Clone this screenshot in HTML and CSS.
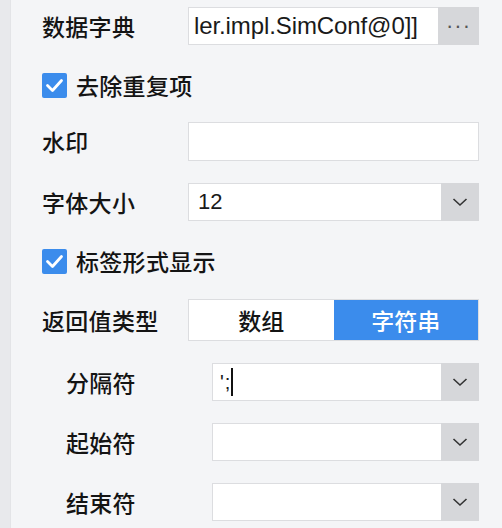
FILE: index.html
```html
<!DOCTYPE html>
<html lang="zh">
<head>
<meta charset="utf-8">
<link rel="stylesheet" href="styles.css">
</head>
<body>
<div class="page">
  <div class="strip"></div>
  <div class="panel">
    <div class="row r1">
      <div class="label">数据字典</div>
      <div class="control">
        <div class="input"><span class="val">ler.impl.SimConf@0]]</span></div>
        <div class="btn dots">···</div>
      </div>
    </div>
    <div class="row cb r2">
      <span class="check"><svg viewBox="0 0 25 25" width="25" height="25"><path d="M5.5 12.5 L10.5 17.5 L19.5 7.5" fill="none" stroke="#fff" stroke-width="2.8" stroke-linecap="round" stroke-linejoin="round"/></svg></span>
      <span class="cbtext">去除重复项</span>
    </div>
    <div class="row r3">
      <div class="label">水印</div>
      <div class="control"><div class="input"></div></div>
    </div>
    <div class="row r4">
      <div class="label">字体大小</div>
      <div class="control">
        <div class="input"><span class="val">12</span></div>
        <div class="btn"><svg viewBox="0 0 16 10" width="16" height="10"><path d="M1.5 2 L8 8 L14.5 2" fill="none" stroke="#333" stroke-width="1.6"/></svg></div>
      </div>
    </div>
    <div class="row cb r5">
      <span class="check"><svg viewBox="0 0 25 25" width="25" height="25"><path d="M5.5 12.5 L10.5 17.5 L19.5 7.5" fill="none" stroke="#fff" stroke-width="2.8" stroke-linecap="round" stroke-linejoin="round"/></svg></span>
      <span class="cbtext">标签形式显示</span>
    </div>
    <div class="row r6">
      <div class="label">返回值类型</div>
      <div class="control seg">
        <div class="segitem">数组</div>
        <div class="segitem on">字符串</div>
      </div>
    </div>
    <div class="row sub r7">
      <div class="label">分隔符</div>
      <div class="control">
        <div class="input"><span class="val sep">';</span><span class="caret"></span></div>
        <div class="btn"><svg viewBox="0 0 16 10" width="16" height="10"><path d="M1.5 2 L8 8 L14.5 2" fill="none" stroke="#333" stroke-width="1.6"/></svg></div>
      </div>
    </div>
    <div class="row sub r8">
      <div class="label">起始符</div>
      <div class="control">
        <div class="input"></div>
        <div class="btn"><svg viewBox="0 0 16 10" width="16" height="10"><path d="M1.5 2 L8 8 L14.5 2" fill="none" stroke="#333" stroke-width="1.6"/></svg></div>
      </div>
    </div>
    <div class="row sub r9">
      <div class="label">结束符</div>
      <div class="control">
        <div class="input"></div>
        <div class="btn"><svg viewBox="0 0 16 10" width="16" height="10"><path d="M1.5 2 L8 8 L14.5 2" fill="none" stroke="#333" stroke-width="1.6"/></svg></div>
      </div>
    </div>
  </div>
</div>
</body>
</html>
```
FILE: styles.css
```css
html, body {
  margin: 0;
  padding: 0;
  background: #f4f5f7;
}
body {
  font-family: "Noto Sans CJK SC", "Noto Sans", sans-serif;
  color: #141414;
}
.page {
  display: flex;
  width: 502px;
  height: 528px;
  overflow: hidden;
}
.strip {
  width: 10px;
  flex: none;
  background: #e8e9ec;
  border-right: 1px solid #e3e4e7;
}
.panel {
  flex: 1;
  display: flex;
  flex-direction: column;
  padding: 7px 23px 0 31px;
}
.row {
  display: flex;
  align-items: center;
  height: 38px;
}
.r2 { margin-top: 27px; height: 26px; }
.r3 { margin-top: 24px; height: 39px; }
.r4 { margin-top: 22px; }
.r5 { margin-top: 27px; height: 26px; }
.r6 { margin-top: 25px; height: 42px; }
.r7 { margin-top: 22px; }
.r8 { margin-top: 22px; }
.r9 { margin-top: 22px; }
.label {
  width: 146px;
  flex: none;
  font-size: 23px;
  font-weight: 500;
  line-height: 1;
  letter-spacing: 0.3px;
}
.sub { padding-left: 24px; }
.control {
  flex: 1;
  height: 100%;
  display: flex;
  box-sizing: border-box;
}
.input {
  flex: 1;
  background: #fff;
  border: 1px solid #dcdde0;
  box-sizing: border-box;
  display: flex;
  align-items: center;
  overflow: hidden;
  white-space: nowrap;
}
.control .input + .btn { margin-left: -1px; }
.val {
  font-family: "Liberation Sans", Arial, sans-serif;
  font-size: 23px;
  padding-left: 5px;
  color: #1a1a1a;
}
.r1 .val { font-size: 24px; letter-spacing: -0.1px; }
.r4 .val { padding-left: 9px; font-size: 22px; }
.sep { padding-left: 7px; font-size: 20px; letter-spacing: 1px; }
.caret {
  width: 2px;
  height: 28px;
  background: #111;
}
.btn {
  width: 38px;
  flex: none;
  background: #d6d7da;
  display: flex;
  align-items: center;
  justify-content: center;
}
.r1 .btn { width: 41px; }
.dots {
  font-family: "Liberation Sans", sans-serif;
  font-size: 22px;
  color: #555;
  letter-spacing: 1px;
  line-height: 1;
}
.cb {
  display: flex;
  align-items: center;
}
.check {
  width: 25px;
  height: 25px;
  background: #3b8cec;
  border-radius: 2px;
  display: flex;
  flex: none;
}
.cbtext {
  margin-left: 9px;
  font-size: 23px;
  font-weight: 500;
  line-height: 1;
  letter-spacing: 0.3px;
}
.seg {
  border: 1px solid #dcdde0;
  background: #fff;
}
.segitem {
  flex: 1;
  display: flex;
  align-items: center;
  justify-content: center;
  font-size: 23px;
  font-weight: 500;
  line-height: 1;
}
.segitem.on {
  background: #3b8cec;
  color: #fff;
}
```
